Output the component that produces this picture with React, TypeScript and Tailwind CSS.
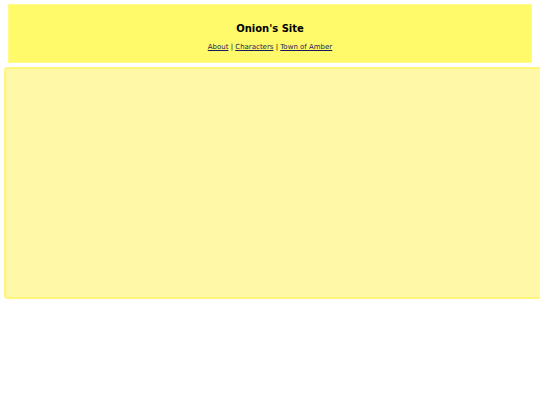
export default function App() {
  return (
    <div className="w-[540px] h-[405px] overflow-hidden bg-white pt-[4px]" style={{ fontFamily: '"DejaVu Sans", sans-serif' }}>
      <div className="ml-[8px] w-[524px] h-[59px] bg-[#fffa6a] border border-[#fffb8c] flex flex-col items-center">
        <h1 className="mt-[19px] text-[10px] font-bold text-black leading-none">Onion's Site</h1>
        <nav className="mt-[10px] text-[7px] leading-none text-black">
          <a href="#" className="underline text-[#1a1a5a]">About</a>
          {" | "}
          <a href="#" className="underline text-[#1a1a5a]">Characters</a>
          {" | "}
          <a href="#" className="underline text-[#1a1a5a]">Town of Amber</a>
        </nav>
      </div>
      <div className="ml-[4px] mt-[4px] w-[550px] h-[232px] bg-[#fff8a6] border-2 border-[#fff47e] rounded-[4px]"></div>
    </div>
  );
}
